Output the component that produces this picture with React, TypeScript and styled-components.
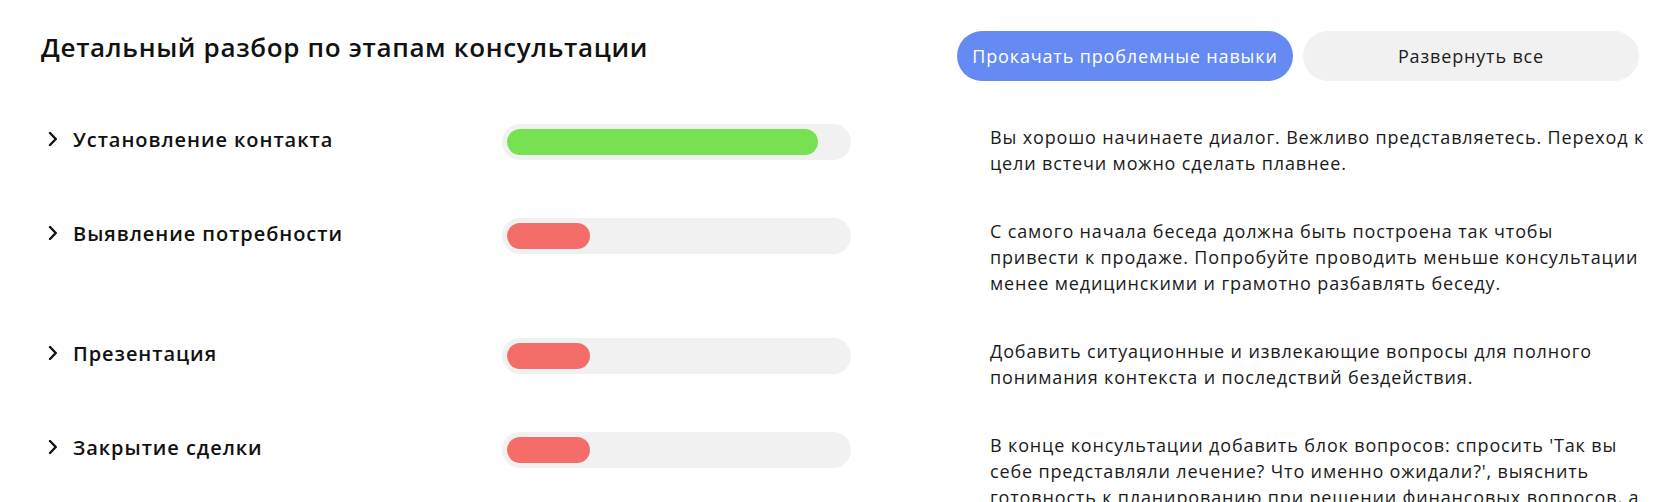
import React from "react";
import styled, { createGlobalStyle } from "styled-components";

const GlobalStyle = createGlobalStyle`
  html, body {
    margin: 0;
    padding: 0;
    background: #ffffff;
  }
  body {
    font-family: "Open Sans", "Noto Sans", sans-serif;
    color: #161616;
  }
`;

type Stage = {
  title: string;
  score: number;
  good: boolean;
  text: string;
};

const stages: Stage[] = [
  {
    title: "Установление контакта",
    score: 91.7,
    good: true,
    text:
      "Вы хорошо начинаете диалог. Вежливо представляетесь. Переход к цели встечи можно сделать плавнее.",
  },
  {
    title: "Выявление потребности",
    score: 24.5,
    good: false,
    text:
      "С самого начала беседа должна быть построена так чтобы привести к продаже. Попробуйте проводить меньше консультации менее медицинскими и грамотно разбавлять беседу.",
  },
  {
    title: "Презентация",
    score: 24.5,
    good: false,
    text:
      "Добавить ситуационные и извлекающие вопросы для полного понимания контекста и последствий бездействия.",
  },
  {
    title: "Закрытие сделки",
    score: 24.5,
    good: false,
    text:
      "В конце консультации добавить блок вопросов: спросить 'Так вы себе представляли лечение? Что именно ожидали?', выяснить готовность к планированию при решении финансовых вопросов, а также обсудить следующий визит.",
  },
];

const Chevron = () => (
  <ChevronIcon viewBox="0 0 10 14" aria-hidden="true">
    <polyline points="2,1 7.8,7 2,13" />
  </ChevronIcon>
);

export default function App() {
  return (
    <>
      <GlobalStyle />
      <Page>
        <Header>
          <Title>Детальный разбор по этапам консультации</Title>
          <Actions>
            <PillButton primary>Прокачать проблемные навыки</PillButton>
            <PillButton>Развернуть все</PillButton>
          </Actions>
        </Header>
        <StageList>
          {stages.map((s) => (
            <StageRow key={s.title}>
              <StageHead>
                <Chevron />
                <StageTitle>{s.title}</StageTitle>
              </StageHead>
              <Track>
                <Fill good={s.good} style={{ width: `${s.score}%` }} />
              </Track>
              <Description>{s.text}</Description>
            </StageRow>
          ))}
        </StageList>
      </Page>
    </>
  );
}

const Page = styled.div`
  padding: 31px 41px 40px 41px;
`;

const Header = styled.div`
  display: flex;
  justify-content: space-between;
  align-items: flex-start;
`;

const Title = styled.h1`
  margin: 0;
  font-size: 26px;
  line-height: 32px;
  font-weight: 600;
  letter-spacing: 0.66px;
  color: #111111;
`;

const Actions = styled.div`
  display: flex;
  gap: 10px;
`;

const PillButton = styled.button<{ primary?: boolean }>`
  width: 336px;
  height: 50px;
  border: none;
  border-radius: 25px;
  font-family: inherit;
  font-size: 18px;
  font-weight: 400;
  letter-spacing: 0.85px;
  background: ${(p) => (p.primary ? "#668af3" : "#f1f1f1")};
  color: ${(p) => (p.primary ? "#ffffff" : "#1c1c1c")};
  cursor: pointer;
`;

const StageList = styled.div`
  margin-top: 43px;
  display: flex;
  flex-direction: column;
  gap: 42px;
`;

const StageRow = styled.div`
  display: flex;
  align-items: flex-start;
`;

const StageHead = styled.div`
  width: 461px;
  display: flex;
  align-items: center;
  gap: 15px;
  padding-left: 7px;
  box-sizing: border-box;
  height: 30px;
  flex: none;
`;

const ChevronIcon = styled.svg`
  width: 10px;
  height: 14px;
  flex: none;
  fill: none;
  stroke: #111111;
  stroke-width: 2.4;
  stroke-linecap: round;
  stroke-linejoin: round;
`;

const StageTitle = styled.span`
  font-size: 20px;
  font-weight: 600;
  letter-spacing: 0.95px;
  color: #111111;
`;

const Track = styled.div`
  width: 349px;
  height: 36px;
  border-radius: 18px;
  background: #f1f1f1;
  padding: 5px;
  box-sizing: border-box;
  flex: none;
`;

const Fill = styled.div<{ good: boolean }>`
  height: 26px;
  border-radius: 13px;
  background: ${(p) => (p.good ? "#77e152" : "#f46d68")};
`;

const Description = styled.p`
  margin: 0 0 0 139px;
  flex: none;
  width: 655px;
  font-size: 18px;
  line-height: 26px;
  letter-spacing: 0.85px;
  color: #1a1a1a;
`;
